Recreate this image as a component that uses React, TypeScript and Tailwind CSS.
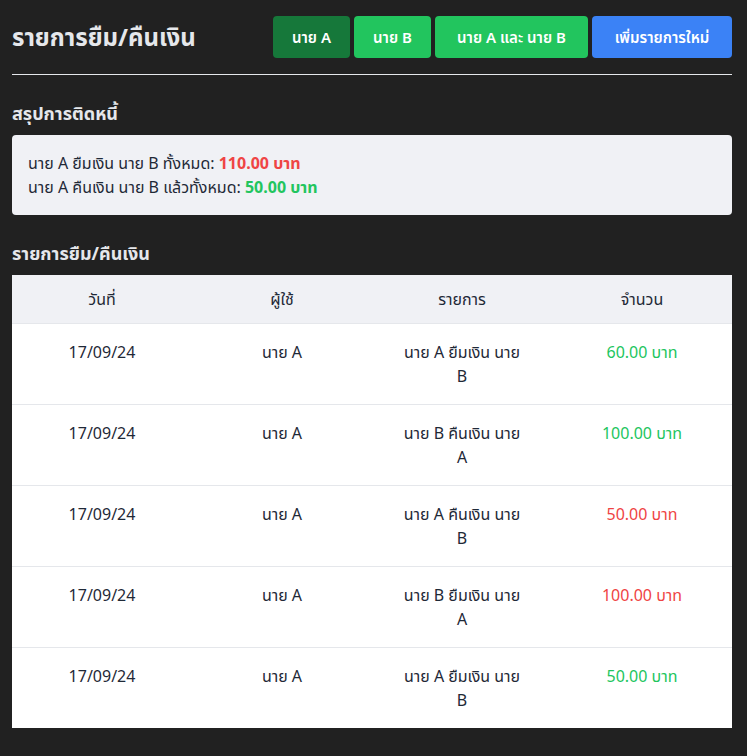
import React from "react";

const rows = [
  { date: "17/09/24", user: "นาย A", desc: "นาย A ยืมเงิน นาย B", amount: "60.00 บาท", color: "text-[#22c55e]" },
  { date: "17/09/24", user: "นาย A", desc: "นาย B คืนเงิน นาย A", amount: "100.00 บาท", color: "text-[#22c55e]" },
  { date: "17/09/24", user: "นาย A", desc: "นาย A คืนเงิน นาย B", amount: "50.00 บาท", color: "text-[#ef4444]" },
  { date: "17/09/24", user: "นาย A", desc: "นาย B ยืมเงิน นาย A", amount: "100.00 บาท", color: "text-[#ef4444]" },
  { date: "17/09/24", user: "นาย A", desc: "นาย A ยืมเงิน นาย B", amount: "50.00 บาท", color: "text-[#22c55e]" },
];

const buttons = [
  { label: "นาย A", className: "bg-[#16783a] w-[77px]" },
  { label: "นาย B", className: "bg-[#22c55e] w-[77px]" },
  { label: "นาย A และ นาย B", className: "bg-[#22c55e] w-[153px]" },
  { label: "เพิ่มรายการใหม่", className: "bg-[#3b82f6] w-[140px]" },
];

const App = () => {
  return (
    <div
      className="min-h-screen bg-[#212121] pl-3 pr-[15px] pt-4 pb-7 text-[#e5e7eb]"
      style={{ fontFamily: '"Noto Sans", "Noto Sans Thai", sans-serif' }}
    >
      <div className="flex items-center justify-between">
        <div className="text-2xl font-bold">รายการยืม/คืนเงิน</div>
        <div className="flex gap-1">
          {buttons.map((b, i) => (
            <div
              key={"btn-" + i}
              className={`h-[42px] flex items-center justify-center rounded text-[15px] font-semibold text-white ${b.className}`}
            >
              {b.label}
            </div>
          ))}
        </div>
      </div>
      <div className="mt-4 border-t border-[#e5e7eb]"></div>

      <div className="mt-6 text-lg font-bold">สรุปการติดหนี้</div>
      <div className="mt-2 rounded bg-[#f0f1f5] px-4 py-4 text-base leading-6 text-[#1f2937]">
        <div>
          นาย A ยืมเงิน นาย B ทั้งหมด: <span className="font-bold text-[#ef4444]">110.00 บาท</span>
        </div>
        <div>
          นาย A คืนเงิน นาย B แล้วทั้งหมด: <span className="font-bold text-[#22c55e]">50.00 บาท</span>
        </div>
      </div>

      <div className="mt-6 text-lg font-bold">รายการยืม/คืนเงิน</div>
      <div className="mt-2 bg-white text-base text-[#1f2937]">
        <div className="grid grid-cols-4 bg-[#f0f1f5] border-b border-[#e5e7eb]">
          {["วันที่", "ผู้ใช้", "รายการ", "จำนวน"].map((h) => (
            <div key={h} className="px-6 py-3 text-center leading-6">
              {h}
            </div>
          ))}
        </div>
        {rows.map((r, i) => (
          <div
            key={"row-" + i}
            className={`grid grid-cols-4 ${i < rows.length - 1 ? "border-b border-[#e5e7eb]" : ""}`}
          >
            <div className="px-6 py-4 text-center leading-6">{r.date}</div>
            <div className="px-6 py-4 text-center leading-6">{r.user}</div>
            <div className="px-6 py-4 text-center leading-6">
              <div className="mx-auto max-w-[124px]">{r.desc}</div>
            </div>
            <div className={`px-6 py-4 text-center leading-6 ${r.color}`}>{r.amount}</div>
          </div>
        ))}
      </div>
    </div>
  );
};

export default App;
